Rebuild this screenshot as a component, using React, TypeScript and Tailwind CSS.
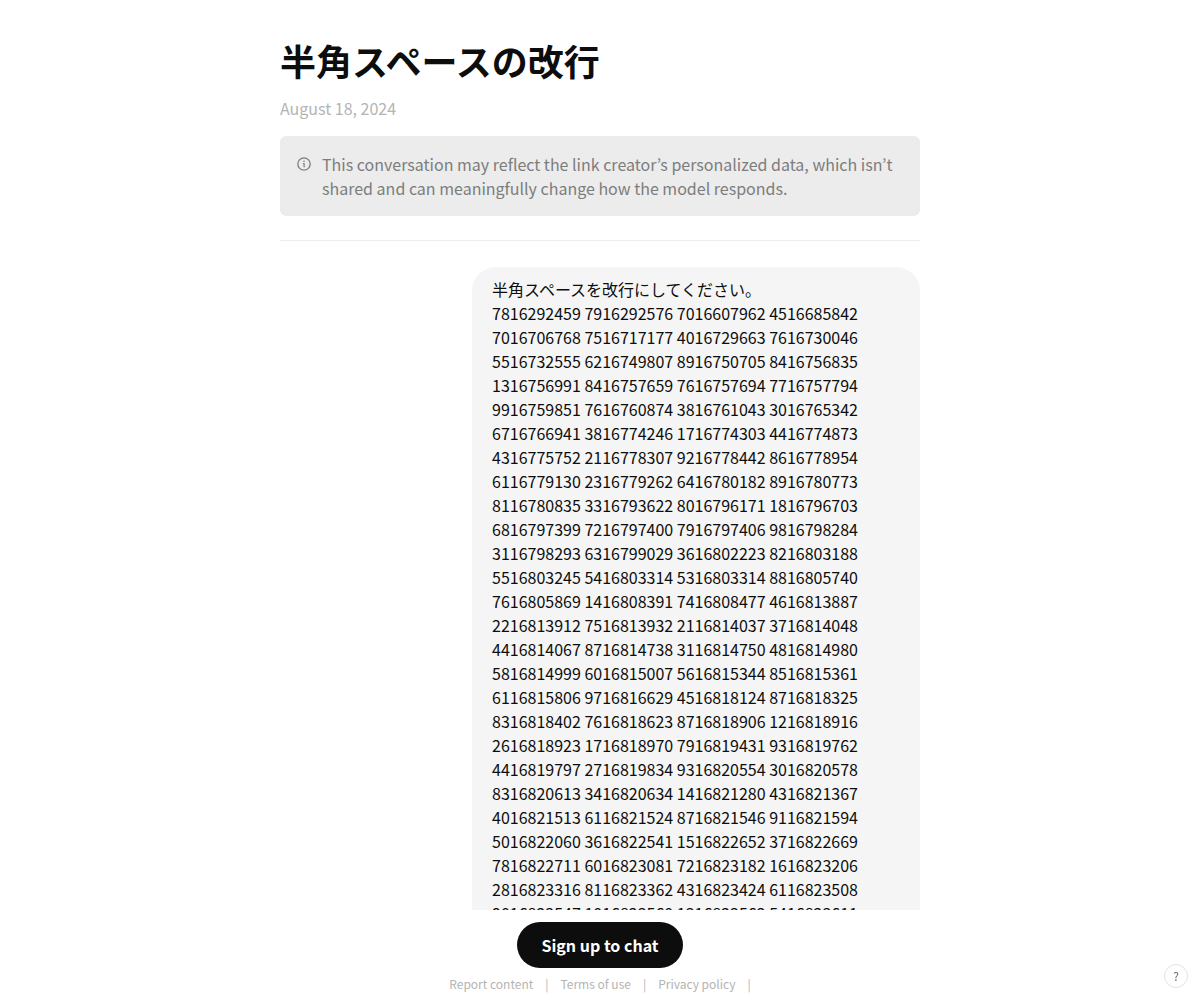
const numbers = `7816292459 7916292576 7016607962 4516685842
7016706768 7516717177 4016729663 7616730046
5516732555 6216749807 8916750705 8416756835
1316756991 8416757659 7616757694 7716757794
9916759851 7616760874 3816761043 3016765342
6716766941 3816774246 1716774303 4416774873
4316775752 2116778307 9216778442 8616778954
6116779130 2316779262 6416780182 8916780773
8116780835 3316793622 8016796171 1816796703
6816797399 7216797400 7916797406 9816798284
3116798293 6316799029 3616802223 8216803188
5516803245 5416803314 5316803314 8816805740
7616805869 1416808391 7416808477 4616813887
2216813912 7516813932 2116814037 3716814048
4416814067 8716814738 3116814750 4816814980
5816814999 6016815007 5616815344 8516815361
6116815806 9716816629 4516818124 8716818325
8316818402 7616818623 8716818906 1216818916
2616818923 1716818970 7916819431 9316819762
4416819797 2716819834 9316820554 3016820578
8316820613 3416820634 1416821280 4316821367
4016821513 6116821524 8716821546 9116821594
5016822060 3616822541 1516822652 3716822669
7816822711 6016823081 7216823182 1616823206
2816823316 8116823362 4316823424 6116823508
9016823547 1016823560 1316823562 5416823611`.replace(/\n/g, " ");

const links = ["Report content", "Terms of use", "Privacy policy"];

function InfoIcon() {
  return (
    <svg width="16" height="16" viewBox="0 0 16 16" fill="none" className="mt-1 shrink-0" aria-hidden="true">
      <circle cx="8" cy="8" r="6.2" stroke="currentColor" strokeWidth="1.3" />
      <path d="M7.4 7.5H8.1V10.8" stroke="currentColor" strokeWidth="1.2" strokeLinecap="round" strokeLinejoin="round" />
      <circle cx="8" cy="5.3" r="0.8" fill="currentColor" />
    </svg>
  );
}

export default function App() {
  return (
    <div className="flex h-screen flex-col bg-white font-['Noto_Sans_CJK_JP',sans-serif] text-base text-[#0d0d0d]">
      <main className="min-h-0 flex-1 overflow-hidden">
        <div className="mx-auto max-w-160 pt-9">
          <header className="border-b border-[#ececec] pb-6">
            <h1 className="text-4xl leading-12 font-bold">半角スペースの改行</h1>
            <p className="mt-2.5 leading-7 text-[#b4b4b4]">August 18, 2024</p>
            <div className="mt-3.5 flex gap-2.5 rounded-md bg-[#ececec] p-4 text-[#7d7d7d]">
              <InfoIcon />
              <p className="leading-6">
                This conversation may reflect the link creator’s personalized data, which isn’t shared and can
                meaningfully change how the model responds.
              </p>
            </div>
          </header>
          <article className="mt-[26px] ml-auto w-[70%] rounded-3xl bg-[#f5f5f5] px-5 py-2.5 leading-6">
            <p>半角スペースを改行にしてください。</p>
            <p>{numbers}</p>
          </article>
        </div>
      </main>
      <footer className="flex flex-col items-center pt-3 pb-1">
        <button type="button" className="rounded-full bg-[#0d0d0d] px-6 py-[11px] leading-6 font-bold text-white">
          Sign up to chat
        </button>
        <nav className="mt-1 flex gap-3 text-xs leading-6 text-[#b4b4b4]">
          {links.map((label) => (
            <span key={label} className="flex gap-3">
              <a href="#">{label}</a>
              <span aria-hidden="true">|</span>
            </span>
          ))}
        </nav>
      </footer>
      <button
        type="button"
        aria-label="Help"
        className="fixed right-3 bottom-3 flex size-6 items-center justify-center rounded-full border border-[#e3e3e3] bg-white text-xs text-[#676767]"
      >
        ?
      </button>
    </div>
  );
}
